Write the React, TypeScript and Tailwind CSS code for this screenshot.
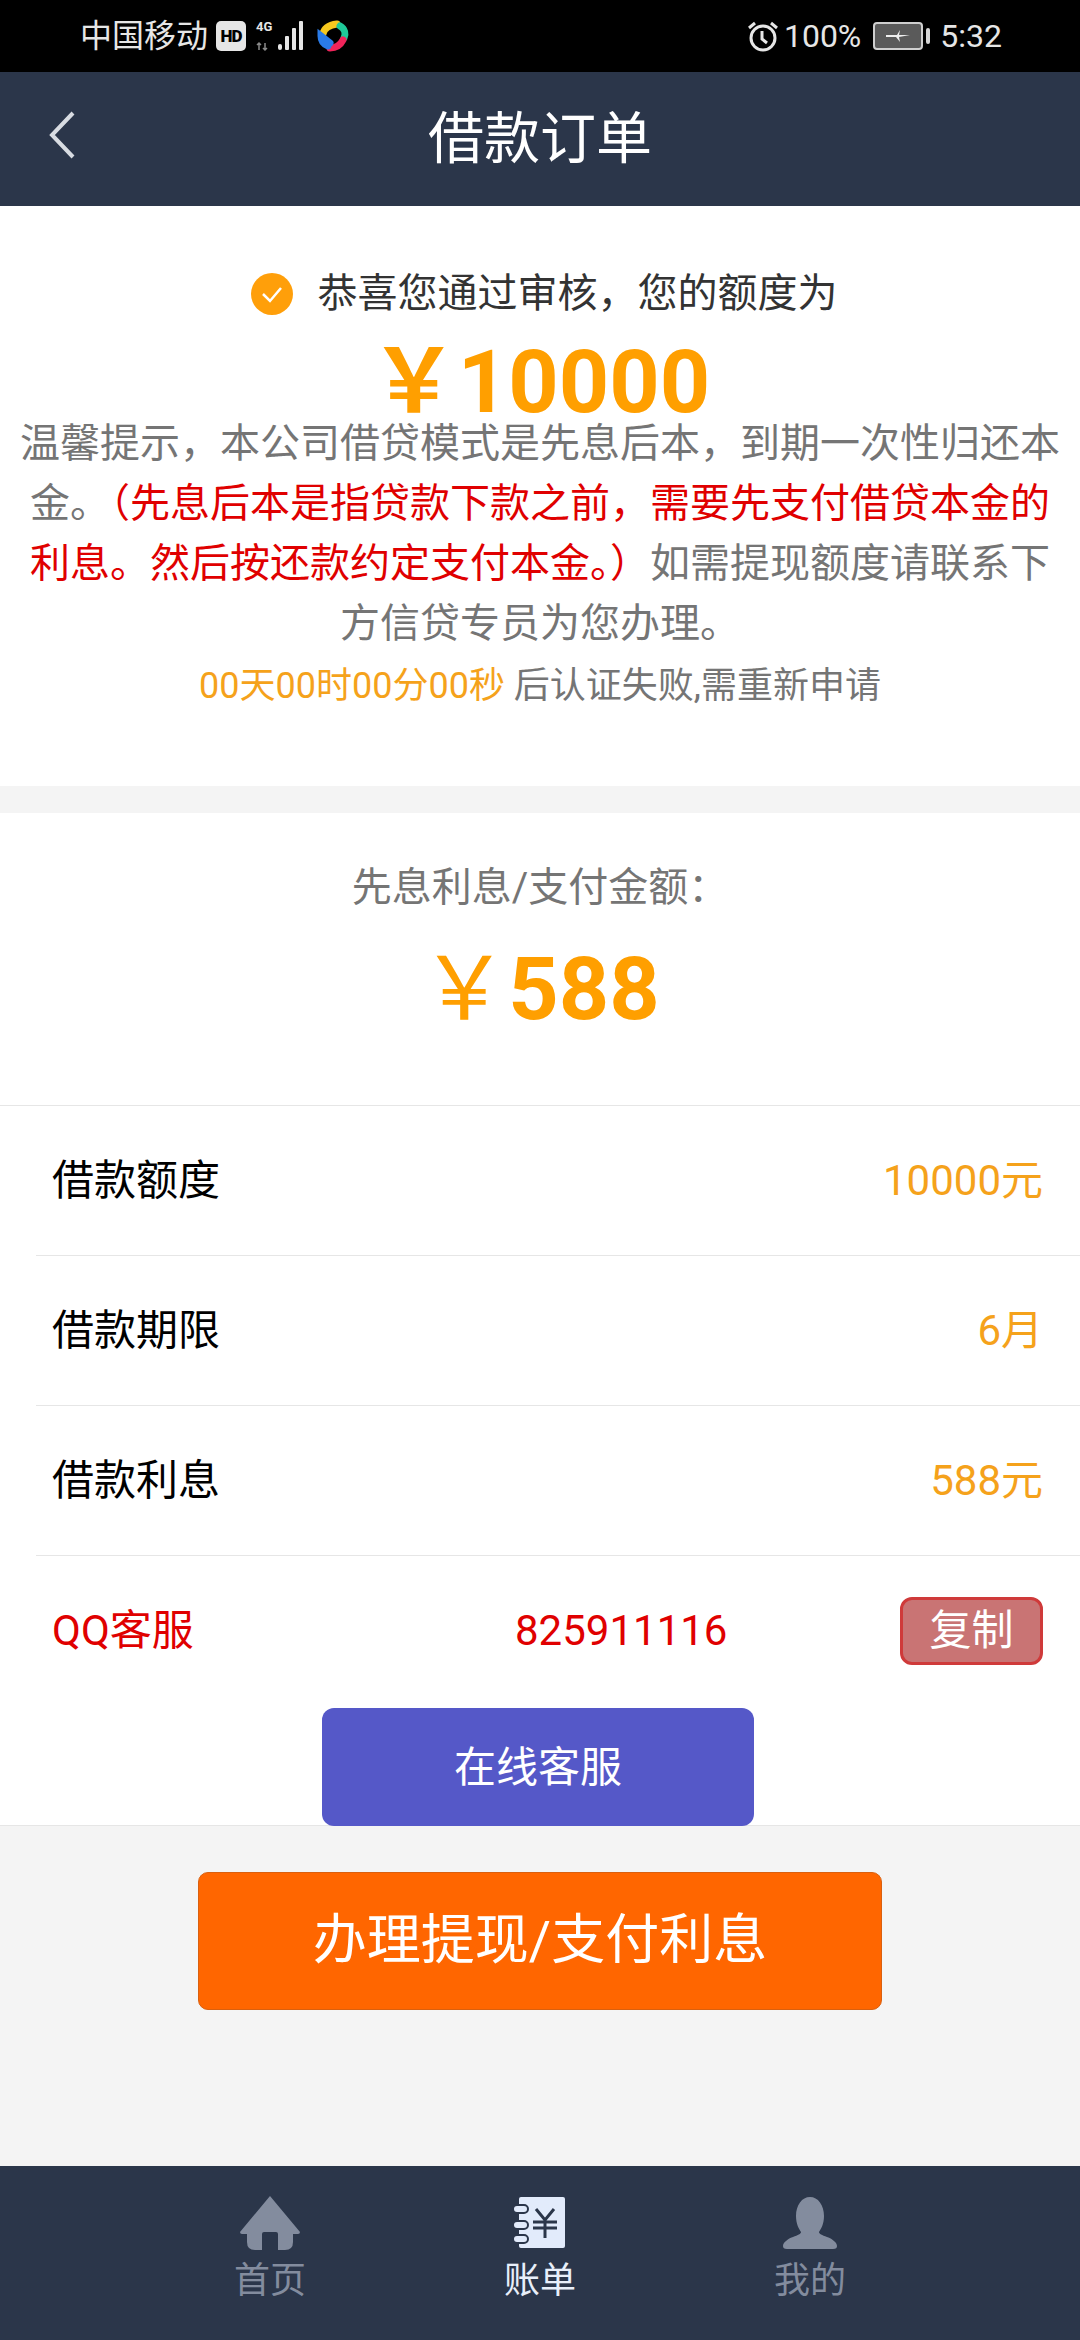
const font = { fontFamily: '"Roboto","Noto Sans CJK SC",sans-serif' };

function StatusBar() {
  return (
    <div className="flex h-[72px] items-center bg-black pl-[80px] pr-[78px] text-[32px] leading-none text-[#e6e6e6]">
      <span>中国移动</span>
      <span className="ml-[8px] flex h-[30px] w-[30px] items-center justify-center rounded-[5px] bg-[#e6e6e6] text-[17px] font-black tracking-tighter text-black">HD</span>
      <div className="relative ml-[10px] h-[32px] w-[50px]">
        <span className="absolute left-0 top-0 text-[13px] font-bold leading-[14px]">4G</span>
        <svg className="absolute left-0 top-0" width="50" height="32" viewBox="0 0 50 32">
          <path d="M3 30v-7M1 25l2-2 2 2M9 23v7M7 28l2 2 2-2" stroke="#8a8a8a" strokeWidth="1.5" fill="none" />
          <g fill="#e6e6e6">
            <rect x="22" y="24" width="4" height="6" rx="2" />
            <rect x="29" y="16" width="4" height="14" rx="1" />
            <rect x="36" y="8" width="4" height="22" rx="1" />
            <rect x="43" y="1" width="4" height="29" rx="1" />
          </g>
        </svg>
      </div>
      <svg className="ml-[10px]" width="34" height="34" viewBox="0 0 34 34" fill="none" strokeWidth="7" strokeLinecap="round">
        <path d="M7 15C8 9 13 6 21 5" stroke="#f7c81e" />
        <path d="M24 7C29 10 30 15 28 19" stroke="#1fc998" />
        <path d="M27 21C24 27 20 29 14 29" stroke="#f0245a" />
        <path d="M12 27C7 25 5 21 5 17L14 24" stroke="#2a7be8" />
      </svg>
      <svg className="ml-auto" width="32" height="32" viewBox="0 0 32 32" fill="none" stroke="#e6e6e6" strokeWidth="3">
        <circle cx="16" cy="18" r="12" />
        <path d="M15 11v8l5 4M2 8l6-5M30 8l-6-5" />
      </svg>
      <span className="ml-[5px]">100%</span>
      <div className="ml-[12px] flex h-[28px] w-[50px] items-center justify-center rounded-[4px] border-2 border-[#cfcfcf] bg-[#5a5a5a]">
        <svg width="26" height="14" viewBox="0 0 26 14" fill="#eeeeee"><path d="M1 6h11l3-5-1 5h11l-11 2 1 5-4-5H1z" /></svg>
      </div>
      <div className="ml-[3px] h-[16px] w-[4px] rounded-full bg-[#d5d5d5]" />
      <span className="ml-[10px]">5:32</span>
    </div>
  );
}

function Row({ label, value }: { label: string; value: string }) {
  return (
    <div className="ml-9 flex h-[150px] items-center justify-between border-t border-[#e6e6e6] pl-4 pr-[37px] text-[42px]">
      <span className="text-black">{label}</span>
      <span className="text-[#f5a21b]">{value}</span>
    </div>
  );
}

function Tab({ label, active, children }: { label: string; active?: boolean; children: React.ReactNode }) {
  return (
    <div className={`flex flex-col items-center ${active ? "text-[#e8effa]" : "text-[#838c9e]"}`}>
      <div className="flex h-[54px] items-center justify-center">{children}</div>
      <span className="mt-[6px] text-[36px] leading-[50px]">{label}</span>
    </div>
  );
}

export default function App() {
  return (
    <div className="flex h-[2340px] w-[1080px] flex-col overflow-hidden bg-[#f4f4f4]" style={font}>
      <StatusBar />
      <header className="relative flex h-[134px] items-center justify-center bg-[#2b364a] text-[56px] leading-none text-white">
        <svg className="absolute left-[48px] top-[38px]" width="28" height="50" viewBox="0 0 28 50" fill="none" stroke="#d8dce2" strokeWidth="4">
          <path d="M25 3L4 25l21 22" />
        </svg>
        <span>借款订单</span>
      </header>

      <section className="flex h-[580px] flex-col items-center bg-white px-[18px] pt-[62px]">
        <div className="flex h-[52px] items-center gap-[25px] pl-[8px] text-[40px] leading-none text-[#333333]">
          <svg width="42" height="42" viewBox="0 0 42 42">
            <circle cx="21" cy="21" r="21" fill="#ff9f0a" />
            <path d="M12 21l7 7 11-13" fill="none" stroke="white" strokeWidth="2.5" />
          </svg>
          <span>恭喜您通过审核，您的额度为</span>
        </div>
        <div className="mt-[10px] flex h-[104px] items-center text-[88px] font-bold leading-none text-[#ff9f00]">￥10000</div>
        <p className="mt-[-20px] text-center text-[40px] leading-[60px] text-[#757575]">
          温馨提示，本公司借贷模式是先息后本，到期一次性归还本金。
          <span className="text-[#e00000]">（先息后本是指贷款下款之前，需要先支付借贷本金的利息。然后按还款约定支付本金。）</span>
          如需提现额度请联系下方信贷专员为您办理。
        </p>
        <p className="text-center text-[36px] leading-[64px] text-[#757575]">
          <span className="text-[#f5a21b]">00天00时00分00秒</span> 后认证失败,需重新申请
        </p>
      </section>

      <section className="mt-[27px] border-b border-[#e6e6e6] bg-white">
        <div className="flex h-[293px] flex-col items-center border-b border-[#e6e6e6] pt-[50px]">
          <div className="text-[40px] leading-[50px] text-[#757575]">先息利息/支付金额：</div>
          <div className="mt-[24px] flex h-[104px] items-center text-[88px] font-bold leading-none text-[#ff9f00]">
            <span className="font-normal">￥</span>588
          </div>
        </div>
        <div className="-mt-px">
          <Row label="借款额度" value="10000元" />
          <Row label="借款期限" value="6月" />
          <Row label="借款利息" value="588元" />
          <div className="ml-9 flex h-[150px] items-center border-t border-[#e6e6e6] pl-4 pr-[37px] text-[42px] text-[#e00000]">
            <span className="w-[463px]">QQ客服</span>
            <span>825911116</span>
            <button className="ml-auto flex h-[68px] w-[143px] items-center justify-center rounded-[12px] border-[3px] border-[#cf3a3a] bg-[#c97474] text-[42px] leading-none text-white">复制</button>
          </div>
        </div>
        <div className="flex justify-center pt-[3px]">
          <button className="-mb-px -ml-[4px] h-[118px] w-[432px] rounded-[12px] bg-[#5558c8] text-[42px] text-white">在线客服</button>
        </div>
      </section>

      <div className="flex flex-1 justify-center pt-[46px]">
        <button className="h-[138px] w-[684px] rounded-[10px] border border-[#d9600f] bg-[#ff6600] text-[54px] leading-none text-white">办理提现/支付利息</button>
      </div>

      <nav className="grid h-[174px] grid-cols-3 bg-[#2b364a] px-[135px] pt-[30px]">
        <Tab label="首页">
          <svg width="60" height="54" viewBox="0 0 60 54" fill="currentColor">
            <path d="M30 0L60 36q0 2-2 2H53v8q0 8-8 8h-7V38q0-2-2-2H24q-2 0-2 2v16h-7q-8 0-8-8V38H2q-2 0-2-2z" />
          </svg>
        </Tab>
        <Tab label="账单" active>
          <svg width="54" height="52" viewBox="0 0 54 52">
            <rect x="6" y="0" width="46" height="51" rx="2" fill="#e2ebfb" />
            <g fill="#e2ebfb" stroke="#2b364a" strokeWidth="2">
              <rect x="0" y="8" width="15" height="8" rx="4" />
              <rect x="0" y="24" width="15" height="8" rx="4" />
              <rect x="0" y="38" width="15" height="8" rx="4" />
            </g>
            <path d="M23 12l9 11 9-11M20 25h24M20 31h24M32 23v18" fill="none" stroke="#2b364a" strokeWidth="3" />
          </svg>
        </Tab>
        <Tab label="我的">
          <svg width="54" height="52" viewBox="0 0 54 52" fill="currentColor">
            <path d="M27 0c8 0 14 8 14 19 0 8-3 13-5 16 0 2 3 3 8 5 6 2 10 6 10 9 0 2-1 3-4 3H4c-3 0-4-1-4-3 0-3 4-7 10-9 5-2 8-3 8-5-2-3-5-8-5-16C13 8 19 0 27 0z" />
          </svg>
        </Tab>
      </nav>
    </div>
  );
}
